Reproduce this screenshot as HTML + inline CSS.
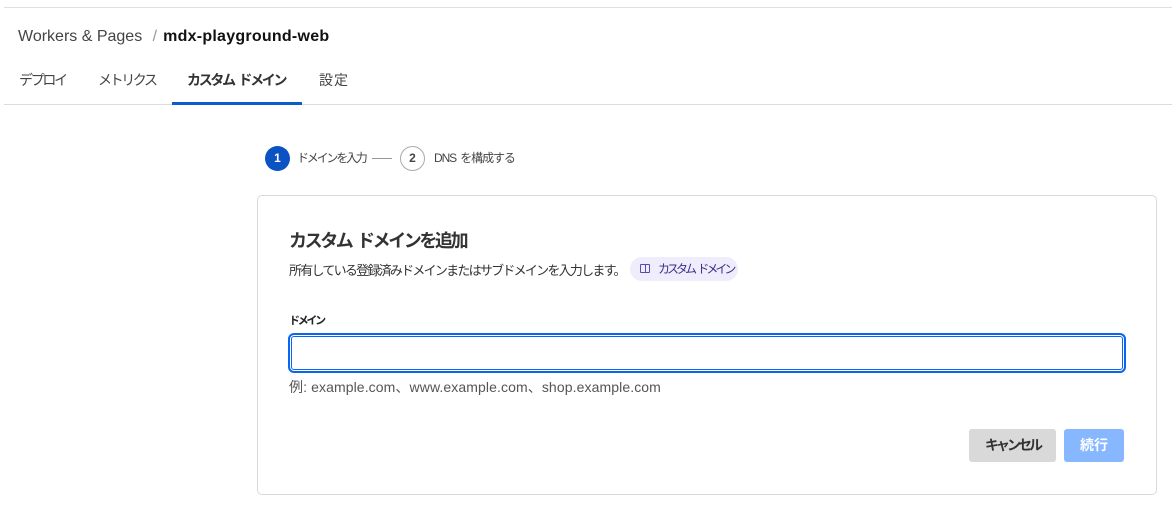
<!DOCTYPE html>
<html><head><meta charset="utf-8"><style>
*{box-sizing:border-box;margin:0;padding:0}
body{width:1176px;height:511px;background:#fff;font-family:"Liberation Sans","Noto Sans CJK JP",sans-serif;color:#313131;position:relative;overflow:hidden}
.a{position:absolute;white-space:nowrap}
</style></head><body>
<div class="a" style="left:4px;top:7px;width:1168px;height:1px;background:#e0e0e0"></div>
<div class="a" style="left:18px;top:27px;font-size:16px;line-height:20px;color:#444">Workers &amp; Pages <span style="color:#999;margin:0 6px">/</span><b style="color:#111;letter-spacing:0.25px">mdx-playground-web</b></div>
<div class="a" style="left:19px;top:70px;font-size:14px;letter-spacing:-2.3px;line-height:20px;color:#444">デプロイ</div>
<div class="a" style="left:98px;top:70px;font-size:14px;letter-spacing:-2.4px;line-height:20px;color:#444">メトリクス</div>
<div class="a" style="left:187px;top:70px;font-size:14px;letter-spacing:-2.3px;word-spacing:3px;line-height:20px;font-weight:bold;color:#333">カスタム ドメイン</div>
<div class="a" style="left:319px;top:70px;font-size:14px;letter-spacing:1px;line-height:20px;color:#444">設定</div>
<div class="a" style="left:4px;top:104px;width:1168px;height:1px;background:#dcdcdc"></div>
<div class="a" style="left:172px;top:102px;width:130px;height:3px;background:#0b5ccc"></div>
<div class="a" style="left:265px;top:146px;width:25px;height:25px;border-radius:50%;background:#0b52c2;color:#fff;font-size:12px;font-weight:bold;text-align:center;line-height:25px">1</div>
<div class="a" style="left:297px;top:150px;font-size:12px;letter-spacing:-2.2px;line-height:16px;color:#444">ドメインを入力</div>
<div class="a" style="left:372px;top:158px;width:20px;height:1px;background:#999"></div>
<div class="a" style="left:400px;top:146px;width:25px;height:25px;border-radius:50%;border:1px solid #aaa;color:#444;font-size:12px;font-weight:bold;text-align:center;line-height:23px">2</div>
<div class="a" style="left:434px;top:150px;font-size:12px;letter-spacing:-1.1px;word-spacing:2px;line-height:16px;color:#444">DNS を構成する</div>
<div class="a" style="left:257px;top:195px;width:900px;height:300px;border:1px solid #d9d9d9;border-radius:5px"></div>
<div class="a" style="left:289px;top:229px;font-size:18px;letter-spacing:-2.4px;word-spacing:3px;line-height:24px;font-weight:bold;color:#333">カスタム ドメインを追加</div>
<div class="a" style="left:289px;top:262px;font-size:13px;letter-spacing:-1.75px;line-height:18px;color:#333">所有している登録済みドメインまたはサブドメインを入力します。</div>
<div class="a" style="left:630px;top:257px;width:108px;height:24px;border-radius:12px;background:#efecfb;font-size:12px;letter-spacing:-3px;word-spacing:3px;line-height:24px;color:#3b2d8a;padding-left:28px">カスタム ドメイン</div>
<div class="a" style="left:640px;top:264px;width:10px;height:9px;border:1.3px solid #5a4bb0;border-radius:1px"></div>
<div class="a" style="left:645px;top:264px;width:1px;height:9px;background:#5a4bb0"></div>
<div class="a" style="left:289px;top:314px;font-size:11px;letter-spacing:-2.3px;line-height:14px;color:#222;font-weight:bold">ドメイン</div>
<div class="a" style="left:288px;top:333px;width:838px;height:40px;border:2px solid #0a66f0;border-radius:6px;box-shadow:inset 0 0 0 1px #fff,inset 0 0 0 2px #0a66f0"></div>
<div class="a" style="left:289px;top:378px;font-size:14px;line-height:18px;color:#555;letter-spacing:0.1px">例: example.com、www.example.com、shop.example.com</div>
<div class="a" style="left:969px;top:429px;width:87px;height:33px;border-radius:3px;background:#d9d9d9;font-size:14px;letter-spacing:-3px;font-weight:bold;line-height:33px;text-align:center;color:#333">キャンセル</div>
<div class="a" style="left:1064px;top:429px;width:60px;height:33px;border-radius:3px;background:#86b7ff;font-size:14px;font-weight:bold;line-height:33px;text-align:center;color:#fff">続行</div>
</body></html>
